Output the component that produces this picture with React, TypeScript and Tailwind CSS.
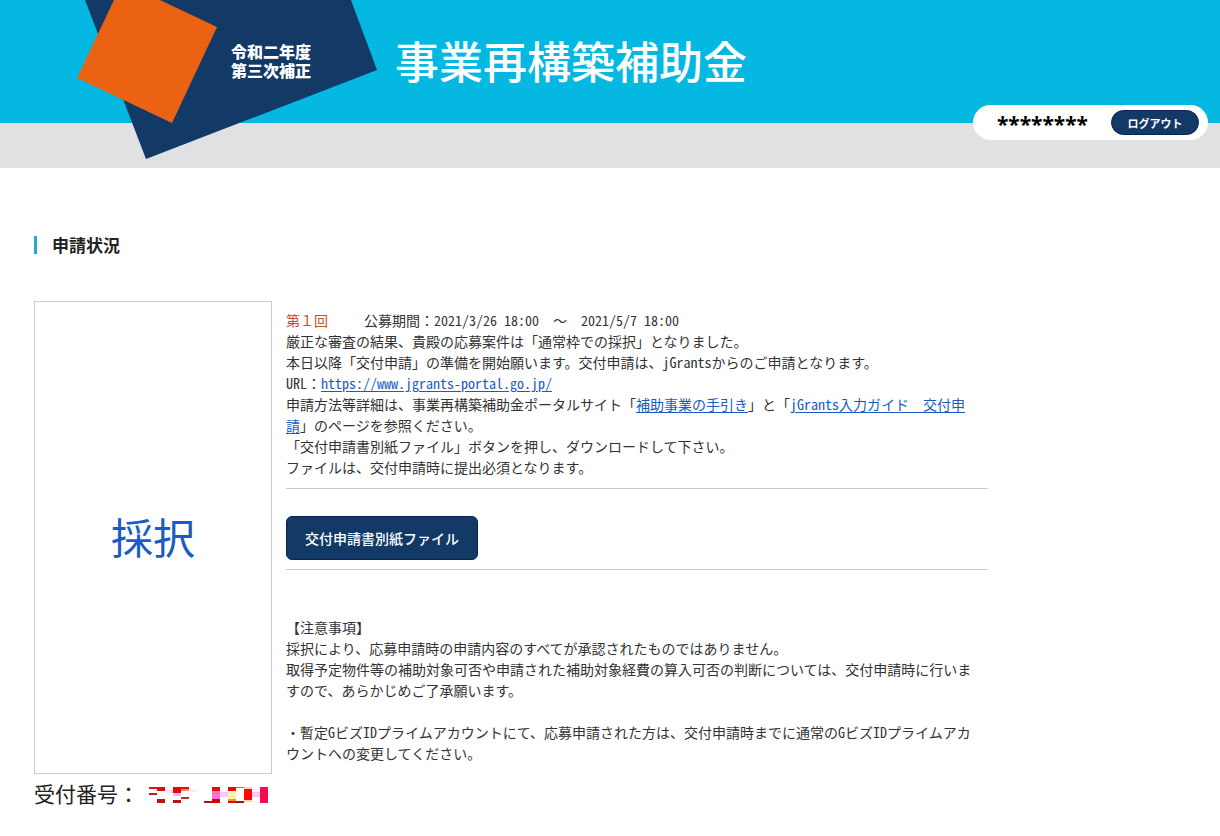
import React from "react";

const half = "[font-feature-settings:'hwid']";
const link = "text-[#1a5bbf] underline underline-offset-2";

function Half({ children }: { children: React.ReactNode }) {
  return <span className={half}>{children}</span>;
}

function Header() {
  return (
    <header className="relative h-[168px] bg-[#dfe1e3]">
      <div className="flex h-[123px] items-start bg-[#04b8e1]">
        <div className="relative ml-[77px] shrink-0">
          <svg width="300" height="160" viewBox="77 0 300 160" aria-hidden="true">
            <path d="M85 0 L351 0 L377 70 L146 159 Z" fill="#133966" />
            <path d="M77 78 L114 0 L160 0 L217 27 L172 123 Z" fill="#ea6212" />
          </svg>
          <p className="absolute top-[42px] left-[154px] text-[16px] leading-[19px] font-black whitespace-nowrap text-white">
            令和二年度
            <br />
            第三次補正
          </p>
        </div>
        <h1 className="ml-[18px] text-[44px] leading-[121px] font-medium whitespace-nowrap text-white">
          事業再構築補助金
        </h1>
      </div>
      <div className="absolute top-[105px] right-3 flex h-[35px] items-center gap-[23px] rounded-full bg-white pr-[9px] pl-6">
        <span className="pt-1 font-['Noto_Sans',sans-serif] text-[21px] leading-[27px] font-bold text-black">
          ********
        </span>
        <button
          type="button"
          className="h-[25px] w-[88px] rounded-full border border-[#0b2350] bg-[#133966] text-[11px] leading-[20px] font-bold text-white"
        >
          ログアウト
        </button>
      </div>
    </header>
  );
}

const MASK: [number, number, number, string][] = [
  [0, 0, 2, "#d81414"], [0, 6, 2, "#c01c1c"],
  [8, 0, 4, "#d80c0c"], [8, 12, 4, "#b81414"], [16, 3, 3, "#ffe0f8"],
  [24, 0, 6, "#e80808"], [24, 6, 3, "#ffb8e8"], [24, 13, 3, "#c01010"],
  [32, 0, 2, "#d01818"], [32, 2, 2, "#f89050"], [32, 10, 2, "#a83838"],
  [40, 3, 2, "#fff4c8"], [55, 14, 2, "#b01010"],
  [63, 0, 4, "#e80808"], [63, 4, 8, "#ff70d0"], [63, 12, 4, "#c80808"],
  [71, 5, 5, "#f4c8ff"], [79, 0, 4, "#e80808"], [79, 4, 8, "#fff0a8"], [79, 12, 2, "#ff9030"], [79, 14, 2, "#d01010"],
  [87, 0, 1, "#c86060"], [87, 4, 8, "#fff8f0"], [87, 14, 2, "#a80c0c"],
  [95, 0, 2, "#ffd8a0"], [95, 2, 11, "#fb0808"], [95, 13, 2, "#ffd0a0"],
  [103, 5, 5, "#f8c8ff"], [111, 0, 16, "#fa0850"],
];

function MaskedNumber() {
  return (
    <svg className="mt-1" width="120" height="16" viewBox="0 0 120 16" shapeRendering="crispEdges" role="img" aria-label="非表示">
      {MASK.map(([x, y, h, fill]) => (
        <rect key={`${x}-${y}`} x={x} y={y} width="8" height={h} fill={fill} />
      ))}
    </svg>
  );
}

export default function App() {
  return (
    <div className="min-h-screen bg-white font-['Noto_Sans_CJK_JP',sans-serif] text-[14px] text-[#333]" lang="ja">
      <Header />
      <main className="px-[34px] pt-[68px] pb-6">
        <h2 className="flex items-center gap-[15px] text-[17px] leading-[18px] font-bold text-[#222]">
          <span className="h-[18px] w-[3px] bg-[#22a9d0]" />
          申請状況
        </h2>
        <div className="mt-[47px] flex max-w-[954px] gap-[14px]">
          <div className="flex w-[238px] shrink-0 items-center justify-center border border-[#ccc] pb-1 text-[42px] text-[#1a5bc4]">
            採択
          </div>
          <div className="min-w-0 flex-1 pt-[9px] pb-[10px] leading-[21px]">
            <div className="pr-[14px] pb-[10px]">
              <p>
                <span className="text-[#d24a2c]">第１回</span>
                <span className="ml-9">
                  公募期間：<Half>2021/3/26 18:00</Half>　～　<Half>2021/5/7 18:00</Half>
                </span>
              </p>
              <p>厳正な審査の結果、貴殿の応募案件は「通常枠での採択」となりました。</p>
              <p>
                本日以降「交付申請」の準備を開始願います。交付申請は、<Half>jGrants</Half>からのご申請となります。
              </p>
              <p>
                <Half>URL</Half>：
                <a className={link} href="https://www.jgrants-portal.go.jp/">
                  <Half>https://www.jgrants-portal.go.jp/</Half>
                </a>
              </p>
              <p>
                申請方法等詳細は、事業再構築補助金ポータルサイト「
                <a className={link} href="#guide">補助事業の手引き</a>」と「
                <a className={link} href="#jgrants">
                  <Half>jGrants</Half>入力ガイド　交付申請
                </a>
                」のページを参照ください。
              </p>
              <p>「交付申請書別紙ファイル」ボタンを押し、ダウンロードして下さい。</p>
              <p>ファイルは、交付申請時に提出必須となります。</p>
            </div>
            <div className="border-y border-[#ccc] pt-[27px] pb-[9px]">
              <button
                type="button"
                className="block h-[44px] w-[192px] rounded-md border border-[#0b2350] bg-[#133966] text-[14px] font-medium text-white"
              >
                交付申請書別紙ファイル
              </button>
            </div>
            <div className="mt-[47px] pr-[14px]">
              <p>【注意事項】</p>
              <p>採択により、応募申請時の申請内容のすべてが承認されたものではありません。</p>
              <p>
                取得予定物件等の補助対象可否や申請された補助対象経費の算入可否の判断については、交付申請時に行いますので、あらかじめご了承願います。
              </p>
              <p className="mt-[21px]">
                ・暫定<Half>G</Half>ビズ<Half>ID</Half>プライムアカウントにて、応募申請された方は、交付申請時までに通常の<Half>G</Half>ビズ<Half>ID</Half>プライムアカウントへの変更してください。
              </p>
            </div>
          </div>
        </div>
        <p className="mt-1 flex items-center gap-[10px] text-[21px] leading-[30px] text-[#222]">
          受付番号：
          <MaskedNumber />
        </p>
      </main>
    </div>
  );
}
